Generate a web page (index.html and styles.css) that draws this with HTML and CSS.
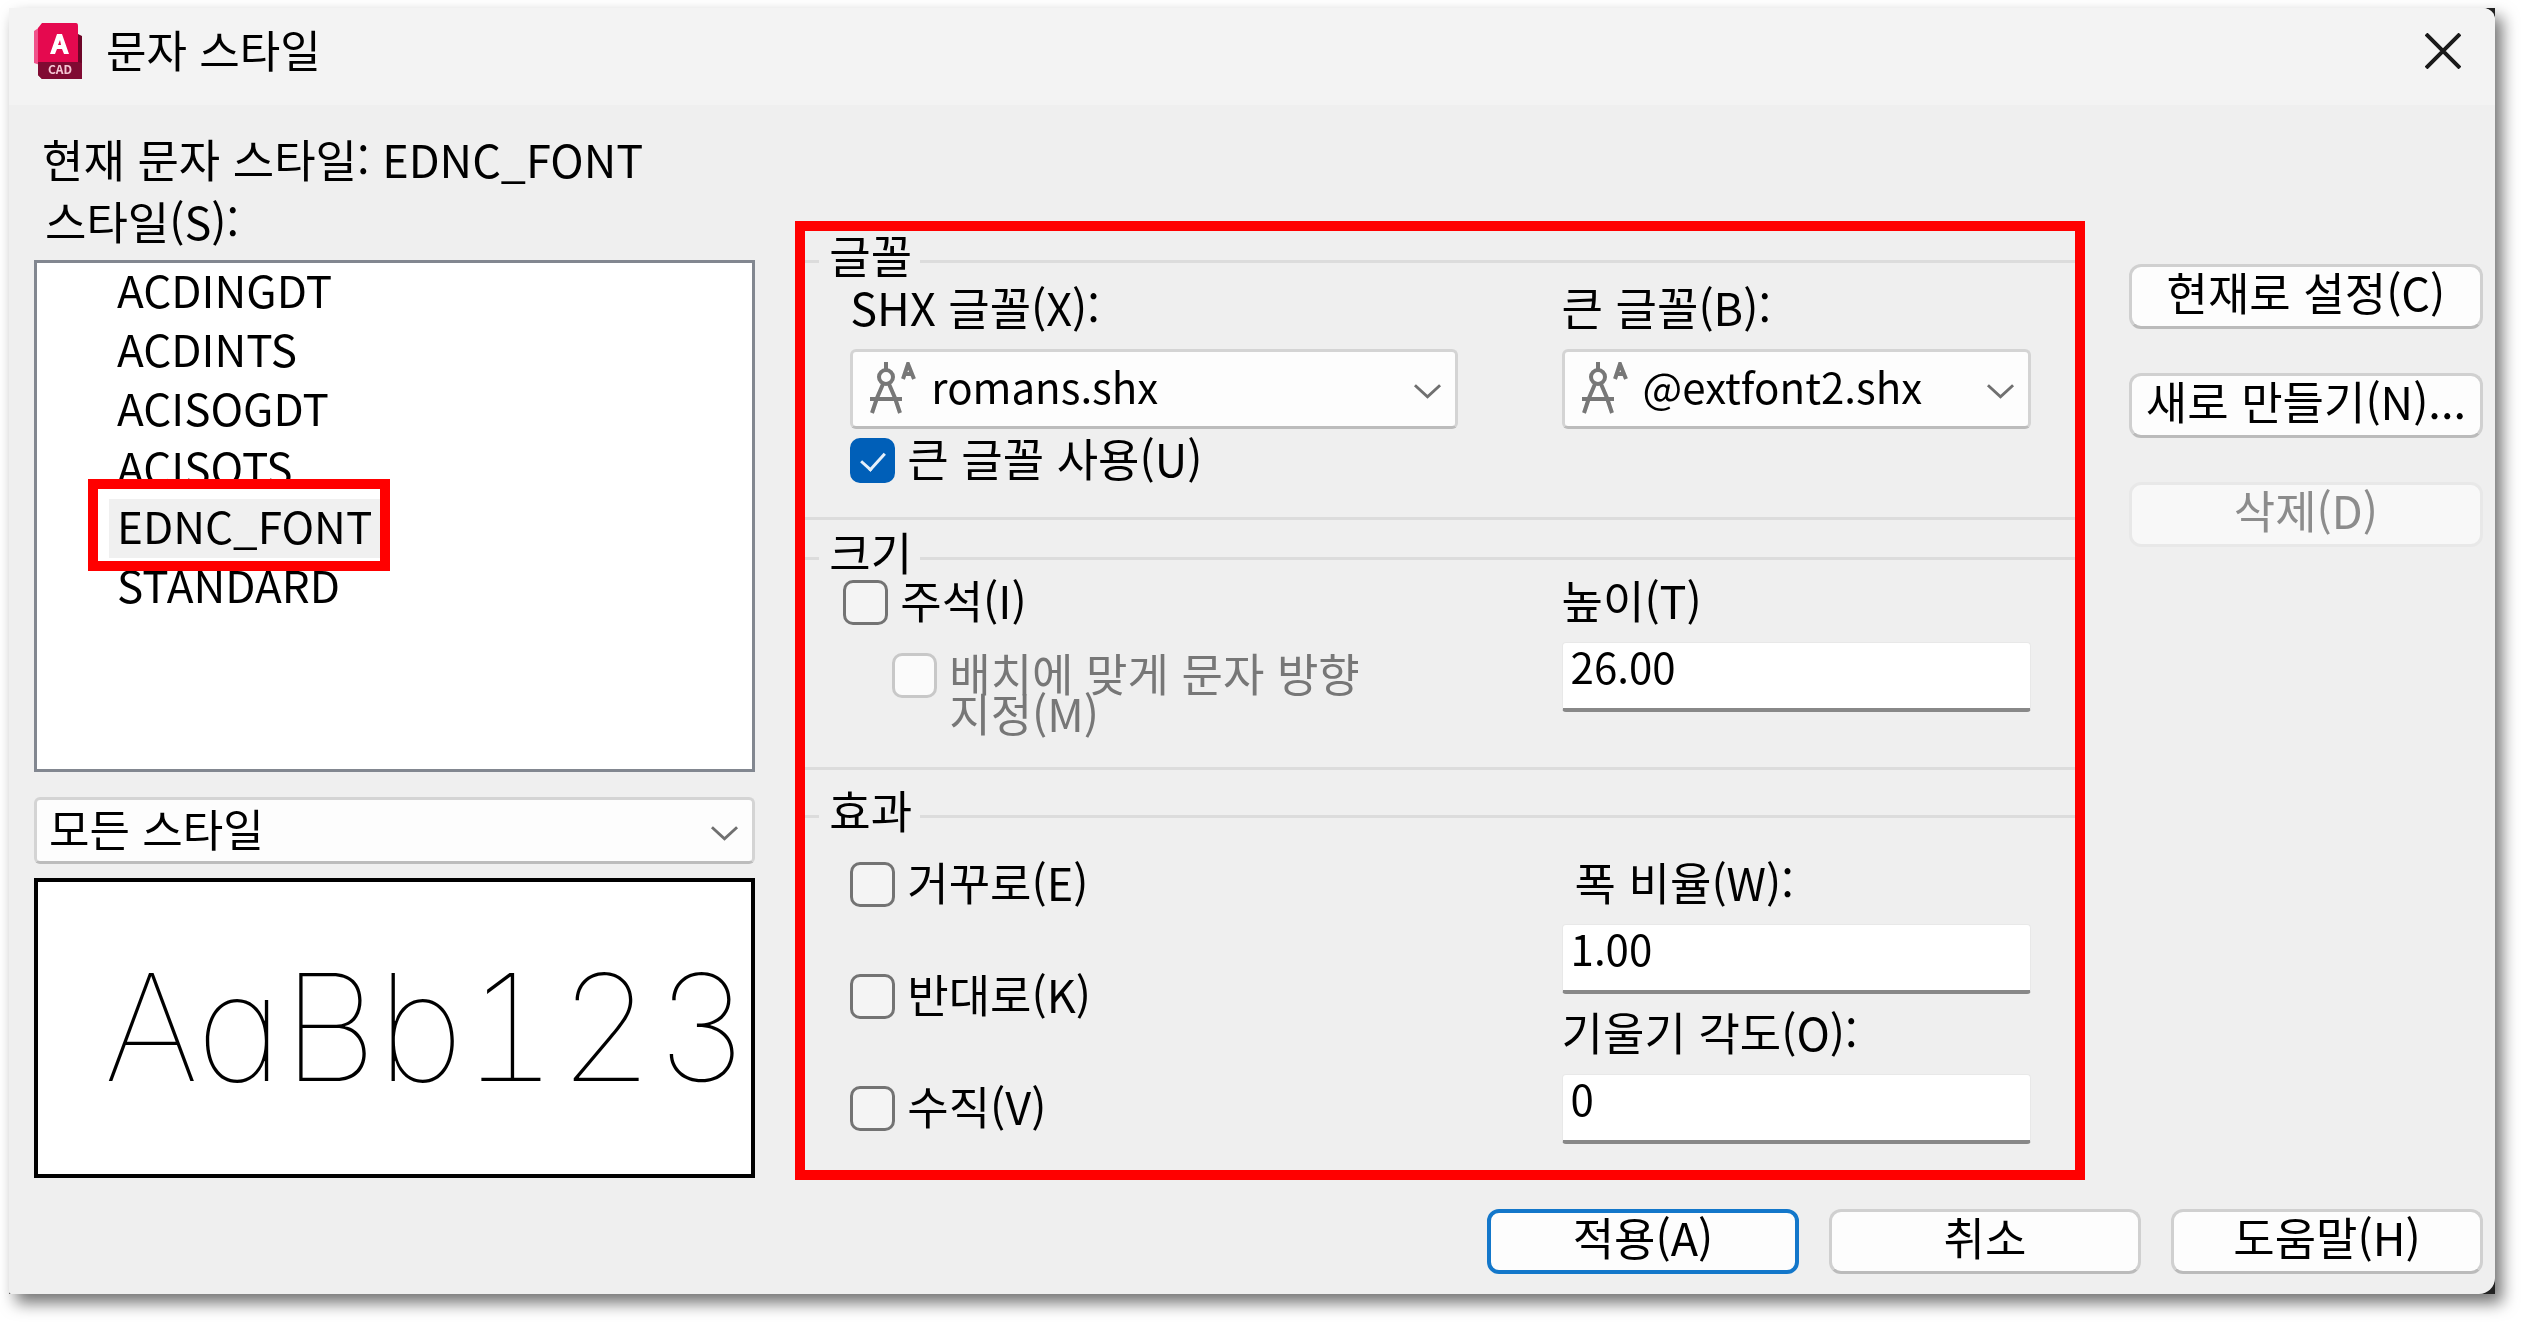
FILE: index.html
```html
<!DOCTYPE html>
<html lang="ko">

<head>
    <meta charset="UTF-8">
    <meta name="viewport" content="width=device-width, initial-scale=1.0">
    <title>문자 스타일</title>
    <link rel="stylesheet" href="styles.css">
</head>

<body>
    <!-- Shared icon shapes -->
    <svg class="defs" width="0" height="0" aria-hidden="true">
        <symbol id="chevron" viewBox="0 0 30 16">
            <path d="M2 2 L15 14 L28 2" fill="none" stroke="#707070" stroke-width="3" />
        </symbol>
        <symbol id="compass" viewBox="0 0 46 52">
            <g fill="none" stroke="#777" stroke-width="4">
                <path d="M16 0 V9" />
                <circle cx="16" cy="15" r="7" />
                <path d="M13 22 L7 36 L2 51 M19 22 L25 36 L30 51" />
                <path d="M0 37 H32" />
                <path d="M33 17 L38 2 L44 17 M34 12 H42" />
            </g>
        </symbol>
    </svg>

    <div class="window">
        <main class="dialog">
            <header class="titlebar">
                <svg class="logo" viewBox="0 0 48 56" aria-hidden="true">
                    <path d="M0 8 L6 4 V42 L0 40 Z" fill="#f0528a" />
                    <path d="M42 10 L48 13 V56 H8 L4 52 V38 H42 Z" fill="#6d0527" />
                    <path d="M8 0 H42 Q44 0 44 3 V39 H4 V5 Z" fill="#e5094f" />
                    <path d="M4 39 H44 L48 40 V56 H8 L4 52 Z" fill="#800a32" />
                    <path d="M16 31 L23 11 H28 L35 31 H30 L28 26 H23 L21 31 Z M24 22 H27 L26 17 Z" fill="#fff" fill-rule="evenodd" />
                    <text class="logo-text" x="26" y="51" text-anchor="middle">CAD</text>
                </svg>
                <h1>문자 스타일</h1>
                <button class="close" type="button" aria-label="닫기">
                    <svg viewBox="0 0 36 36" aria-hidden="true">
                        <path d="M1 1 L35 35 M35 1 L1 35" fill="none" stroke="#1a1a1a" stroke-width="4" />
                    </svg>
                </button>
            </header>

            <form class="content">
                <div class="styles">
                    <p class="current">현재 문자 스타일: EDNC_FONT</p>
                    <p class="styles-label" id="stylesLabel">스타일(S):</p>
                    <ul class="style-list" role="listbox" aria-labelledby="stylesLabel">
                        <li role="option">ACDINGDT</li>
                        <li role="option">ACDINTS</li>
                        <li role="option">ACISOGDT</li>
                        <li role="option">ACISOTS</li>
                        <li role="option" class="selected" aria-selected="true">EDNC_FONT</li>
                        <li role="option">STANDARD</li>
                    </ul>
                    <div class="combo filter">
                        <select aria-label="스타일 필터">
                            <option>모든 스타일</option>
                        </select>
                        <svg class="chevron"><use href="#chevron" /></svg>
                    </div>
                    <div class="preview">AaBb123</div>
                </div>

                <div class="settings">
                    <fieldset class="font-group">
                        <legend>글꼴</legend>
                        <div class="columns">
                            <div class="field">
                                <label for="shxFont">SHX 글꼴(X):</label>
                                <div class="combo with-icon">
                                    <svg class="compass"><use href="#compass" /></svg>
                                    <select id="shxFont">
                                        <option>romans.shx</option>
                                    </select>
                                    <svg class="chevron"><use href="#chevron" /></svg>
                                </div>
                                <label class="check"><input type="checkbox" checked>큰 글꼴 사용(U)</label>
                            </div>
                            <div class="field">
                                <label for="bigFont">큰 글꼴(B):</label>
                                <div class="combo with-icon">
                                    <svg class="compass"><use href="#compass" /></svg>
                                    <select id="bigFont">
                                        <option>@extfont2.shx</option>
                                    </select>
                                    <svg class="chevron"><use href="#chevron" /></svg>
                                </div>
                            </div>
                        </div>
                    </fieldset>

                    <fieldset class="size-group">
                        <legend>크기</legend>
                        <div class="columns">
                            <div class="annotative">
                                <label class="check"><input type="checkbox">주석(I)</label>
                                <label class="check nested"><input type="checkbox" disabled><span>배치에 맞게 문자 방향<br>지정(M)</span></label>
                            </div>
                            <div class="field">
                                <label for="height">높이(T)</label>
                                <input type="text" id="height" value="26.00">
                            </div>
                        </div>
                    </fieldset>

                    <fieldset class="effect-group">
                        <legend>효과</legend>
                        <div class="columns">
                            <div class="effects">
                                <label class="check"><input type="checkbox">거꾸로(E)</label>
                                <label class="check"><input type="checkbox">반대로(K)</label>
                                <label class="check"><input type="checkbox">수직(V)</label>
                            </div>
                            <div class="numbers">
                                <div class="field">
                                    <label class="indent" for="widthFactor">폭 비율(W):</label>
                                    <input type="text" id="widthFactor" value="1.00">
                                </div>
                                <div class="field">
                                    <label for="angle">기울기 각도(O):</label>
                                    <input type="text" id="angle" value="0">
                                </div>
                            </div>
                        </div>
                    </fieldset>
                </div>

                <div class="actions">
                    <button class="btn" type="button">현재로 설정(C)</button>
                    <button class="btn" type="button">새로 만들기(N)...</button>
                    <button class="btn" type="button" disabled>삭제(D)</button>
                </div>

                <footer class="footer">
                    <button class="btn primary" type="button">적용(A)</button>
                    <button class="btn" type="button">취소</button>
                    <button class="btn" type="button">도움말(H)</button>
                </footer>
            </form>
        </main>
    </div>
</body>

</html>
```
FILE: styles.css
```css
* {
    box-sizing: border-box;
}

body {
    margin: 0;
    padding: 8px 28px 29px 9px;
    background-color: #fff;
    color: #000;
    font-family: "Noto Sans CJK KR", "Noto Sans", sans-serif;
    font-size: 45px;
    line-height: 40px;
}

h1,
p,
ul {
    margin: 0;
    padding: 0;
}

input,
select,
button {
    font: inherit;
    color: inherit;
}

.defs {
    position: absolute;
}

.window {
    background-color: #222;
    filter: drop-shadow(7px 9px 8px rgba(0, 0, 0, 0.55));
}

.dialog {
    background-color: #efefef;
    border-radius: 0 12px 16px 2px;
    overflow: hidden;
}

/* Title bar */
.titlebar {
    display: flex;
    align-items: flex-start;
    gap: 24px;
    height: 97px;
    padding: 15px 34px 0 25px;
    background-color: #f3f3f3;
}

.logo {
    width: 48px;
    height: 56px;
}

.logo-text {
    fill: #f5c6d4;
    font-size: 12px;
    font-weight: bold;
}

h1 {
    flex: 1;
    padding-top: 6px;
    font-size: 44px;
    font-weight: normal;
}

.close {
    margin-top: 10px;
    padding: 0;
    border: none;
    background: none;
}

.close svg {
    display: block;
    width: 36px;
    height: 36px;
}

/* Main layout */
.content {
    display: grid;
    grid-template-columns: minmax(0, 721fr) minmax(0, 1289fr) minmax(0, 358fr);
    column-gap: 40px;
    padding: 0 12px 20px 25px;
}

.styles {
    display: flex;
    flex-direction: column;
    padding-top: 34px;
}

.current {
    padding-left: 8px;
}

.styles-label {
    margin: 22px 0 19px;
    padding-left: 11px;
}

.style-list {
    min-height: 512px;
    padding: 0 72px;
    border: 3px solid #828790;
    background-color: #fff;
    list-style: none;
    font-size: 44px;
    line-height: 53px;
}

.style-list li {
    width: max-content;
    padding: 0 8px 6px;
}

.selected {
    position: relative;
    background-color: #f0f0f0;
}

/* Red marker drawn around the selected style */
.selected::after {
    content: "";
    position: absolute;
    top: -20px;
    bottom: -13px;
    left: -21px;
    right: -10px;
    border: 10px solid #f00;
}

.preview {
    height: 300px;
    margin-top: 14px;
    padding-left: 66px;
    border: 4px solid #000;
    background-color: #fff;
    font-family: "Inter", "Roboto", sans-serif;
    font-feature-settings: "cv11", "tnum";
    font-size: 148px;
    font-weight: 100;
    line-height: 292px;
    white-space: nowrap;
    overflow: hidden;
}

/* Drop-downs */
.combo {
    position: relative;
    height: 80px;
}

.combo select {
    display: block;
    width: 100%;
    height: 100%;
    padding: 0 60px 6px 12px;
    border: 3px solid #d4d4d4;
    border-bottom-color: #bcbcbc;
    border-radius: 6px;
    background-color: #fdfdfd;
    font-size: 44px;
    line-height: 56px;
    appearance: none;
}

.combo.filter {
    height: 67px;
    margin-top: 25px;
}

.combo.with-icon select {
    padding-left: 78px;
    font-size: 42px;
}

.chevron {
    position: absolute;
    top: 50%;
    right: 16px;
    width: 29px;
    height: 16px;
    margin-top: -6px;
}

.compass {
    position: absolute;
    top: 13px;
    left: 20px;
    width: 46px;
    height: 52px;
}

/* Font, size and effect groups */
.settings {
    margin-top: 116px;
    padding-top: 8px;
    border: 10px solid #f00;
}

fieldset {
    min-width: 0;
    margin: 0;
    padding: 0 44px 34px 45px;
    border: 0 solid #dcdcdc;
    border-width: 3px 0;
}

legend {
    margin-left: -31px;
    padding: 0 8px 12px 10px;
    line-height: 32px;
}

.columns {
    display: grid;
    grid-template-columns: minmax(0, 607fr) minmax(0, 469fr);
    column-gap: 104px;
}

.font-group .columns {
    padding-top: 4px;
}

.size-group {
    margin-top: 16px;
}

.effect-group {
    margin-top: 24px;
    padding-bottom: 26px;
    border-bottom: none;
}

.effect-group .columns {
    padding-top: 24px;
}

.field > label:first-child {
    display: block;
    margin-bottom: 22px;
}

.field .indent {
    padding-left: 13px;
}

.field input[type="text"] {
    display: block;
    width: 100%;
    height: 70px;
    padding: 0 8px 20px;
    border: 1px solid #e8e8e8;
    border-bottom: 4px solid #888;
    border-radius: 4px;
    background-color: #fff;
    font-size: 42px;
}

.numbers,
.effects,
.annotative {
    display: flex;
    flex-direction: column;
    align-items: flex-start;
}

.numbers {
    align-items: stretch;
    gap: 18px;
}

.effects {
    gap: 67px;
}

.annotative {
    gap: 28px;
    margin-left: -7px;
}

.nested {
    margin-left: 49px;
}

/* Tick boxes */
.check {
    display: flex;
    align-items: flex-start;
    gap: 12px;
}

.combo + .check {
    margin-top: 9px;
}

.check input {
    flex: none;
    width: 45px;
    height: 45px;
    margin: 0;
    border: 3px solid #737373;
    border-radius: 10px;
    background-color: #f4f4f4;
    appearance: none;
}

.check input:checked {
    display: grid;
    place-items: center;
    border-color: #005fb8;
    background-color: #005fb8;
}

.check input:checked::before {
    content: "";
    width: 11px;
    height: 20px;
    margin-top: -5px;
    border: solid #e6f0fa;
    border-width: 0 3px 3px 0;
    transform: rotate(42deg);
}

.check input:disabled {
    border-color: #c8c8c8;
    background-color: #fbfbfb;
}

.check:has(input:disabled) {
    color: #777;
}

/* Buttons */
.btn {
    height: 65px;
    padding: 0 0 10px;
    border: 3px solid #d0d0d0;
    border-bottom-color: #bbb;
    border-radius: 12px;
    background-color: #fdfdfd;
    white-space: nowrap;
}

.btn:disabled {
    border-color: #e8e8e8;
    background-color: #f8f8f8;
    color: #8c8c8c;
}

.btn.primary {
    border: 4px solid #1377ca;
}

.actions {
    display: flex;
    flex-direction: column;
    gap: 44px;
    margin-top: 159px;
    padding-left: 4px;
}

.footer {
    grid-column: 1 / -1;
    display: flex;
    justify-content: flex-end;
    gap: 30px;
    margin-top: 29px;
}

.footer .btn {
    width: 312px;
}
```
